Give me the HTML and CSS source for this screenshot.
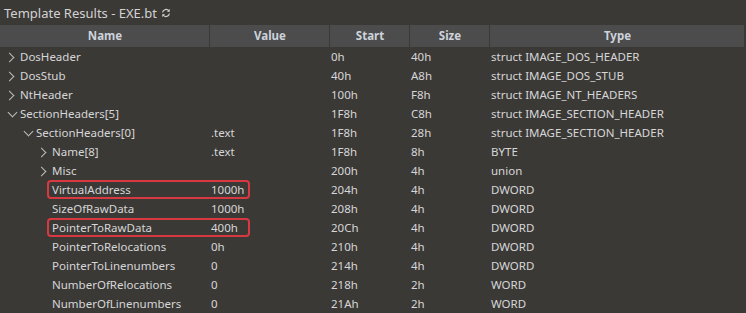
FILE: index.html
```html
<!DOCTYPE html>
<html>
  <head>
    <meta charset="utf-8" />
    <link rel="stylesheet" href="styles.css">
    <title>Template Results</title>
  </head>
  <body>
    <div class="title">
      <span>Template Results - EXE.bt</span>
      <svg class="refresh" width="10" height="10" viewBox="0 0 10 10">
        <path d="M1.5 4.5 A3.6 3.6 0 0 1 8 3" fill="none" stroke="#cfcfcf" stroke-width="1.2"/>
        <path d="M8.8 1 L8.6 4 L5.8 3.4 Z" fill="#cfcfcf"/>
        <path d="M8.5 5.5 A3.6 3.6 0 0 1 2 7" fill="none" stroke="#cfcfcf" stroke-width="1.2"/>
        <path d="M1.2 9 L1.4 6 L4.2 6.6 Z" fill="#cfcfcf"/>
      </svg>
    </div>

    <div class="grid">
      <div class="head">Name</div>
      <div class="head">Value</div>
      <div class="head">Start</div>
      <div class="head">Size</div>
      <div class="head last">Type</div>

      <div class="name l0"><span class="arr right"></span>DosHeader</div>
      <div></div><div>0h</div><div>40h</div><div>struct IMAGE_DOS_HEADER</div>

      <div class="name l0"><span class="arr right"></span>DosStub</div>
      <div></div><div>40h</div><div>A8h</div><div>struct IMAGE_DOS_STUB</div>

      <div class="name l0"><span class="arr right"></span>NtHeader</div>
      <div></div><div>100h</div><div>F8h</div><div>struct IMAGE_NT_HEADERS</div>

      <div class="name l0 open"><span class="arr down"></span>SectionHeaders[5]</div>
      <div></div><div>1F8h</div><div>C8h</div><div>struct IMAGE_SECTION_HEADER</div>

      <div class="name l1 open"><span class="arr down"></span>SectionHeaders[0]</div>
      <div>.text</div><div>1F8h</div><div>28h</div><div>struct IMAGE_SECTION_HEADER</div>

      <div class="name l2"><span class="arr right"></span>Name[8]</div>
      <div>.text</div><div>1F8h</div><div>8h</div><div>BYTE</div>

      <div class="name l2"><span class="arr right"></span>Misc</div>
      <div></div><div>200h</div><div>4h</div><div>union</div>

      <div class="name l2 mark"><span class="arr"></span>VirtualAddress<span class="box"></span></div>
      <div>1000h</div><div>204h</div><div>4h</div><div>DWORD</div>

      <div class="name l2"><span class="arr"></span>SizeOfRawData</div>
      <div>1000h</div><div>208h</div><div>4h</div><div>DWORD</div>

      <div class="name l2 mark"><span class="arr"></span>PointerToRawData<span class="box"></span></div>
      <div>400h</div><div>20Ch</div><div>4h</div><div>DWORD</div>

      <div class="name l2"><span class="arr"></span>PointerToRelocations</div>
      <div>0h</div><div>210h</div><div>4h</div><div>DWORD</div>

      <div class="name l2"><span class="arr"></span>PointerToLinenumbers</div>
      <div>0</div><div>214h</div><div>4h</div><div>DWORD</div>

      <div class="name l2"><span class="arr"></span>NumberOfRelocations</div>
      <div>0</div><div>218h</div><div>2h</div><div>WORD</div>

      <div class="name l2"><span class="arr"></span>NumberOfLinenumbers</div>
      <div>0</div><div>21Ah</div><div>2h</div><div>WORD</div>
    </div>
  </body>
</html>
```

FILE: styles.css
```css
* {
  box-sizing: border-box;
}
html, body {
  margin: 0;
  background: #3b3936;
  color: #d6d6d6;
  font-family: "Noto Sans", "Open Sans", sans-serif;
  font-size: 11.5px;
  overflow: hidden;
}
.title {
  height: 25px;
  display: flex;
  align-items: center;
  gap: 4px;
  padding: 0 0 0 4px;
  font-size: 13px;
  color: #d2d2d2;
}
.refresh {
  margin-top: 1px;
}
.grid {
  display: grid;
  grid-template-columns: 210px 120px 80px 80px 1fr;
  grid-template-rows: 22px;
  grid-auto-rows: 19px;
  margin-right: 2px;
}
.grid > div {
  white-space: nowrap;
  line-height: 18px;
  padding-top: 1px;
  padding-left: 1px;
}
.grid > .head {
  height: 22px;
  line-height: 22px;
  padding-top: 0;
  background: #4c4c4c;
  border-right: 1px solid #3b3936;
  text-align: center;
  font-weight: bold;
  color: #cdd3db;
}
.grid > .head.last {
  border-right: 0;
}
.name {
  position: relative;
  display: flex;
  align-items: center;
}
.l0 { padding-left: 4px !important; }
.l1 { padding-left: 20px !important; }
.l2 { padding-left: 36px !important; }
.arr {
  width: 16px;
  height: 18px;
  flex: none;
  position: relative;
}
.arr.right::after {
  content: "";
  position: absolute;
  left: 2px;
  top: 6px;
  width: 6px;
  height: 6px;
  border-right: 1px solid #bdbdbd;
  border-bottom: 1px solid #bdbdbd;
  transform: rotate(-45deg);
}
.arr.down::after {
  content: "";
  position: absolute;
  left: 5px;
  top: 4px;
  width: 6px;
  height: 6px;
  border-right: 1px solid #bdbdbd;
  border-bottom: 1px solid #bdbdbd;
  transform: rotate(45deg);
}
.box {
  position: absolute;
  left: 47px;
  top: 0;
  width: 203px;
  height: 19px;
  border: 2px solid #d8383f;
  border-radius: 4px;
  pointer-events: none;
}
```
